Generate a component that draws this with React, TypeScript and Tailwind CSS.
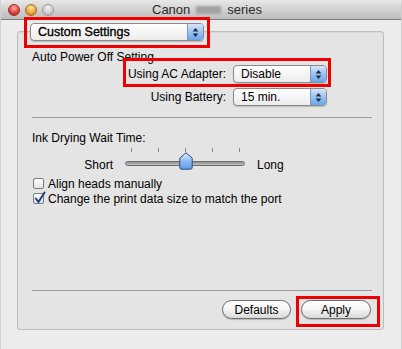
import React from "react";

function Arrows() {
  return (
    <svg width="7" height="11" viewBox="0 0 7 11">
      <path d="M3.5 1 L6.3 4.6 L0.7 4.6 Z" fill="#1d2a44" />
      <path d="M3.5 10 L6.3 6.4 L0.7 6.4 Z" fill="#1d2a44" />
    </svg>
  );
}

function Popup({ label, className, textClass }: { label: string; className: string; textClass?: string }) {
  return (
    <div
      className={
        "flex h-[18px] rounded-[4px] border border-[#8a8a8a] bg-gradient-to-b from-white to-[#ececec] shadow-[0_1px_1px_rgba(0,0,0,0.18)] " +
        className
      }
    >
      <div className={"flex flex-1 items-center pl-[7px] leading-none text-black " + (textClass ?? "")}>{label}</div>
      <div className="flex w-[16px] items-center justify-center rounded-r-[3px] border-l border-[#8096b8] bg-gradient-to-b from-[#d6e6fb] via-[#9cc3f1] to-[#6aa5ea]">
        <Arrows />
      </div>
    </div>
  );
}

function Checkbox({ checked }: { checked?: boolean }) {
  return (
    <div className="relative h-[11px] w-[11px] rounded-[2px] border border-[#7b7b7b] bg-gradient-to-b from-white to-[#e2e2e2]">
      {checked && (
        <svg className="absolute left-[0px] top-[-3px]" width="12" height="13" viewBox="0 0 12 13">
          <path d="M1.8 7.5 L4.5 11 L10.5 1.5" fill="none" stroke="#1e3f8a" strokeWidth="2" strokeLinecap="round" strokeLinejoin="round" />
        </svg>
      )}
    </div>
  );
}

function Button({ label, className }: { label: string; className: string }) {
  return (
    <div
      className={
        "flex h-[19px] items-center justify-center rounded-full border border-[#6f6f6f] bg-gradient-to-b from-white via-[#f4f4f4] to-[#d9d9d9] text-black shadow-[0_1px_1px_rgba(0,0,0,0.2)] " +
        className
      }
    >
      {label}
    </div>
  );
}

export default function App() {
  return (
    <div
      className="relative flex h-[349px] w-[402px] flex-col overflow-hidden border-x border-[#d0d0d0] bg-[#ececec] text-[12px] text-black"
      style={{ fontFamily: '"Liberation Sans", Arial, sans-serif' }}
    >
      {/* Title bar */}
      <div className="relative flex h-[20px] shrink-0 items-center rounded-t-[5px] border-b border-[#7d7d7d] bg-gradient-to-b from-[#e8e8e8] to-[#bcbcbc]">
        <div className="flex items-center gap-[5px] pl-[7px]">
          <div className="h-[12px] w-[12px] rounded-full border border-[#9a2b27] bg-[radial-gradient(circle_at_50%_30%,#ffb0a8,#e5453b_55%,#a31d16)]" />
          <div className="h-[12px] w-[12px] rounded-full border border-[#a3701c] bg-[radial-gradient(circle_at_50%_30%,#ffe9a4,#f2a53a_55%,#b8720e)]" />
          <div className="h-[12px] w-[12px] rounded-full border border-[#9a9a9a] bg-[radial-gradient(circle_at_50%_30%,#f2f2f2,#cfcfcf_55%,#a9a9a9)]" />
        </div>
        <div className="absolute left-[151px] top-[3px] flex items-center text-[13px] leading-[14px] text-[#2b2b2b]">
          <span>Canon</span>
          <span className="mx-[6px] inline-block h-[8px] w-[25px] bg-[#a3a3a3] blur-[1px]" />
          <span>series</span>
        </div>
      </div>

      {/* Body */}
      <div className="flex flex-col pl-[16px] pt-[3px]">
        <div className="relative z-10 ml-[13px]">
          <Popup label="Custom Settings" className="w-[174px]" textClass="text-[12.5px] [-webkit-text-stroke:0.35px_#000]" />
        </div>
        <div className="-mt-[10px] flex h-[299px] w-[367px] flex-col rounded-[3px] border border-[#bdbdbd] bg-[#e4e4e4] pl-[14px] pr-[12px] shadow-[inset_0_1px_1px_rgba(0,0,0,0.06)]">
          <div className="mt-[18px] h-[15px] leading-[15px]">Auto Power Off Setting</div>
          <div className="flex h-[18px] items-center">
            <div className="w-[194px] text-right leading-none">Using AC Adapter:</div>
            <Popup label="Disable" className="ml-[7px] w-[94px]" />
          </div>
          <div className="mt-[5px] flex h-[18px] items-center">
            <div className="w-[194px] text-right leading-none">Using Battery:</div>
            <Popup label="15 min." className="ml-[7px] w-[94px]" />
          </div>
          <div className="mt-[11px] h-px w-[340px] bg-[#9c9c9c]" />
          <div className="mt-[13px] h-[15px] leading-[15px]">Ink Drying Wait Time:</div>
          <div className="mt-[2px] flex h-[24px] items-end">
            <div className="mb-[1px] w-[81px] text-right leading-none">Short</div>
            <div className="relative ml-[12px] h-[24px] w-[120px]">
              <div className="absolute left-[6px] top-0 h-[4px] w-px bg-[#8a8a8a]" />
              <div className="absolute left-[33px] top-0 h-[4px] w-px bg-[#8a8a8a]" />
              <div className="absolute left-[60px] top-0 h-[4px] w-px bg-[#8a8a8a]" />
              <div className="absolute left-[87px] top-0 h-[4px] w-px bg-[#8a8a8a]" />
              <div className="absolute left-[114px] top-0 h-[4px] w-px bg-[#8a8a8a]" />
              <div className="absolute left-0 top-[13px] h-[5px] w-[120px] rounded-full border border-[#6e6e6e] bg-gradient-to-b from-[#8c8c8c] to-[#c4c4c4]" />
              <svg className="absolute left-[54px] top-[4px]" width="14" height="18" viewBox="0 0 14 18">
                <defs>
                  <linearGradient id="kn" x1="0" y1="0" x2="0" y2="1">
                    <stop offset="0" stopColor="#e4f0fd" />
                    <stop offset="0.5" stopColor="#8fbcf0" />
                    <stop offset="1" stopColor="#5e9be6" />
                  </linearGradient>
                </defs>
                <path d="M7 0.8 L13.2 6 L13.2 15.5 Q13.2 17.2 11.5 17.2 L2.5 17.2 Q0.8 17.2 0.8 15.5 L0.8 6 Z" fill="url(#kn)" stroke="#2f4a7e" strokeWidth="1" />
              </svg>
            </div>
            <div className="mb-[1px] ml-[12px] leading-none">Long</div>
          </div>
          <div className="mt-[4px] flex h-[15px] items-center gap-[4px] pl-[1px]">
            <Checkbox />
            <span className="leading-none">Align heads manually</span>
          </div>
          <div className="flex h-[15px] items-center gap-[4px] pl-[1px]">
            <Checkbox checked />
            <span className="leading-none">Change the print data size to match the port</span>
          </div>
          <div className="mt-auto h-px w-[340px] bg-[#9c9c9c]" />
          <div className="mb-[10px] mt-[9px] flex justify-end gap-[10px]">
            <Button label="Defaults" className="w-[69px]" />
            <Button label="Apply" className="w-[70px]" />
          </div>
        </div>
      </div>

      {/* Red annotation frames */}
      <div className="pointer-events-none absolute left-[23px] top-[17px] h-[31px] w-[186px] border-[3px] border-[#ee0000]" />
      <div className="pointer-events-none absolute left-[122px] top-[58px] h-[29px] w-[208px] border-[3px] border-[#ee0000]" />
      <div className="pointer-events-none absolute left-[295px] top-[296px] h-[31px] w-[84px] border-[3px] border-[#ee0000]" />
    </div>
  );
}
